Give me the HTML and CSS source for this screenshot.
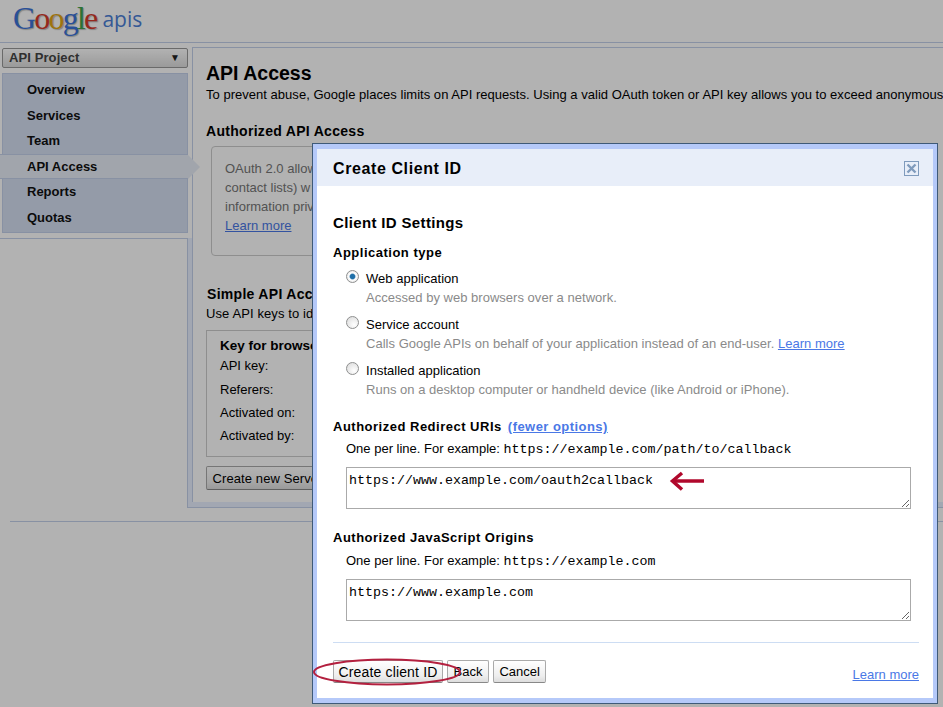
FILE: index.html
```html
<!DOCTYPE html>
<html lang="en">
<head>
  <meta charset="UTF-8" />
  <title>Google apis - API Access</title>
  <link rel="stylesheet" href="styles.css">
</head>
<body>
  <header class="top">
    <div class="logo"><span class="g-blue">G</span><span class="g-red">o</span><span class="g-yellow">o</span><span class="g-blue">g</span><span class="g-green">l</span><span class="g-red">e</span></div>
    <div class="logo-apis">apis</div>
  </header>

  <div class="layout">
    <aside class="side">
      <div class="project">API Project <span class="project-arrow">▼</span></div>
      <nav class="nav">
        <a class="nav-item">Overview</a>
        <a class="nav-item">Services</a>
        <a class="nav-item">Team</a>
        <a class="nav-item active">API Access</a>
        <a class="nav-item">Reports</a>
        <a class="nav-item">Quotas</a>
      </nav>
      <div class="side-rest"></div>
    </aside>

    <main class="panel">
      <h1>API Access</h1>
      <p class="intro">To prevent abuse, Google places limits on API requests. Using a valid OAuth token or API key allows you to exceed anonymous</p>

      <h2>Authorized API Access</h2>
      <div class="oauth-box">
        <div>OAuth 2.0 allow</div>
        <div>contact lists) w</div>
        <div>information priv</div>
        <div><a class="link">Learn more</a></div>
      </div>

      <h2 class="simple-title">Simple API Acc</h2>
      <p class="simple-text">Use API keys to id</p>
      <div class="key-box">
        <div class="key-title">Key for browse</div>
        <div class="key-row first">API key:</div>
        <div class="key-row">Referers:</div>
        <div class="key-row">Activated on:</div>
        <div class="key-row">Activated by:</div>
      </div>
      <button class="btn server-btn">Create new Serve</button>
    </main>
  </div>
  <div class="panel-foot"></div>
  <hr class="page-rule">

  <div class="overlay"></div>

  <div class="modal">
    <div class="modal-inner">
      <div class="modal-title">
        <span>Create Client ID</span>
        <span class="close">
          <svg width="13" height="13" viewBox="0 0 13 13"><path d="M2.5 2.5l8 8M10.5 2.5l-8 8" stroke="#7f9bbd" stroke-width="2.4" fill="none"/></svg>
        </span>
      </div>
      <div class="modal-body">
        <h3>Client ID Settings</h3>
        <h4 class="type-title">Application type</h4>

        <label class="choice">
          <input type="radio" name="apptype" checked>
          <span class="choice-name">Web application</span>
          <span class="choice-hint">Accessed by web browsers over a network.</span>
        </label>
        <label class="choice">
          <input type="radio" name="apptype">
          <span class="choice-name">Service account</span>
          <span class="choice-hint">Calls Google APIs on behalf of your application instead of an end-user. <a class="link">Learn more</a></span>
        </label>
        <label class="choice">
          <input type="radio" name="apptype">
          <span class="choice-name">Installed application</span>
          <span class="choice-hint">Runs on a desktop computer or handheld device (like Android or iPhone).</span>
        </label>

        <h4 class="uri-title">Authorized Redirect URIs <a class="link">(fewer options)</a></h4>
        <p class="uri-help">One per line. For example: <code>https://example.com/path/to/callback</code></p>
        <textarea class="uri-input" spellcheck="false">https://www.example.com/oauth2callback</textarea>

        <h4 class="origin-title">Authorized JavaScript Origins</h4>
        <p class="uri-help origin-help">One per line. For example: <code>https://example.com</code></p>
        <textarea class="uri-input" spellcheck="false">https://www.example.com</textarea>

        <div class="modal-actions">
          <button class="btn action-main">Create client ID</button>
          <button class="btn">Back</button>
          <button class="btn">Cancel</button>
          <a class="link actions-more">Learn more</a>
        </div>
      </div>
    </div>
  </div>

  <!-- red marks drawn over the dialog -->
  <svg class="mark-arrow" width="38" height="20" viewBox="0 0 38 20">
    <path d="M37 10H6" stroke="#b0082c" stroke-width="3.5" fill="none"/>
    <path d="M15 2L5.5 10l9.5 8.5" stroke="#b0082c" stroke-width="3.5" fill="none"/>
  </svg>
  <svg class="mark-ring" width="150" height="30" viewBox="0 0 150 30">
    <ellipse cx="75" cy="14" rx="73" ry="12.5" stroke="#b3203f" stroke-width="2" fill="none"/>
  </svg>
</body>
</html>
```

FILE: styles.css
```css
:root {
  --line: #c3d0ea;
  --band: #e9f0ff;
  --nav-bg: #d5dff1;
  --link: #4a78e6;
}

* {
  box-sizing: border-box;
}

html, body {
  height: 100%;
}

body {
  font-family: "Liberation Sans", Arial, sans-serif;
  font-size: 13px;
  color: #000;
  background: #fff;
  margin: 0;
  overflow: hidden;
  position: relative;
}

.link {
  color: var(--link);
  text-decoration: underline;
}

.btn {
  font-family: inherit;
  font-size: 13px;
  height: 23px;
  padding: 0 5.5px;
  color: #000;
  border: 1px solid #aaa;
  border-bottom-color: #888;
  border-radius: 2px;
  background: linear-gradient(#fff, #eee 70%, #ddd);
}

/* header */
.top {
  height: 43px;
  padding-left: 13px;
  display: flex;
  align-items: flex-start;
  border-bottom: 1px solid var(--line);
}

.logo {
  font-family: "Liberation Serif", serif;
  font-size: 32px;
  line-height: 37px;
  letter-spacing: -1.8px;
  text-shadow: 1px 1px 1px #bbb;
}

.logo-apis {
  font-family: "Open Sans", sans-serif;
  font-size: 21px;
  line-height: 38px;
  margin-left: 6px;
  color: #4c7fd6;
}

.g-blue { color: #3b73d9; }
.g-red { color: #d63a2c; }
.g-yellow { color: #e2a514; }
.g-green { color: #3fa34a; }

/* left column */
.layout {
  display: flex;
  height: 455px;
  margin-top: 4px;
}

.side {
  width: 192px;
  flex: none;
  display: flex;
  flex-direction: column;
  padding-top: 1px;
}

.project {
  margin: 0 4px 0 2px;
  height: 20px;
  padding: 0 7px 2px 6px;
  display: flex;
  justify-content: space-between;
  align-items: center;
  font-size: 13px;
  font-weight: bold;
  letter-spacing: 0.1px;
  color: #444;
  border: 1px solid #999;
  border-radius: 2px;
  background: linear-gradient(#fff, #ddd);
}

.project-arrow {
  font-size: 10px;
  color: #222;
}

.nav {
  margin: 5px 4px 5px 2px;
  height: 160px;
  padding-top: 3px;
  background: var(--nav-bg);
  border: 1px solid var(--line);
  display: flex;
  flex-direction: column;
}

.nav-item {
  height: 25.6px;
  line-height: 25px;
  padding-left: 24px;
  font-size: 13px;
  font-weight: bold;
  color: #111;
}

.nav-item.active {
  position: relative;
  margin: 0 -1px 0 -3px;
  padding-left: 27px;
  background: #e7ecf6;
  border-top: 1px solid var(--line);
  border-bottom: 1px solid var(--line);
  line-height: 23px;
}

.nav-item.active::after {
  content: "";
  position: absolute;
  left: 100%;
  top: 0;
  border-left: 12px solid #e7ecf6;
  border-top: 12px solid transparent;
  border-bottom: 12px solid transparent;
}

.side-rest {
  flex: 1;
  margin-right: 4px;
  border-top: 1px solid var(--line);
  border-right: 1px solid var(--line);
  box-shadow: 4px 0 0 var(--band);
}

/* main panel */
.panel {
  flex: 1;
  min-width: 0;
  padding: 12px 0 0 13px;
  border-top: 1px solid var(--line);
  border-left: 1px solid var(--line);
  white-space: nowrap;
  overflow: hidden;
}

h1 {
  font-size: 19.5px;
  line-height: 26px;
  margin: 0;
}

.intro {
  margin: 1px 0 0;
  line-height: 16px;
  font-size: 13px;
  letter-spacing: 0.025px;
}

h2 {
  font-size: 14px;
  line-height: 18px;
  letter-spacing: 0.3px;
  margin: 19px 0 0;
}

.oauth-box {
  width: 600px;
  margin: 6px 0 0 5px;
  height: 110px;
  padding: 12px 0 0 13px;
  line-height: 19px;
  font-size: 13px;
  color: #767676;
  border: 1px solid #ccc;
  border-radius: 4px;
}

.simple-title {
  margin: 29px 0 0 1px;
}

.simple-text {
  margin: 3px 0 0;
  line-height: 16px;
  letter-spacing: 0.1px;
}

.key-box {
  width: 600px;
  margin-top: 8px;
  height: 127px;
  padding: 6px 0 0 13px;
  border: 1px solid #ccc;
}

.key-title {
  font-size: 13.5px;
  font-weight: bold;
  line-height: 17px;
}

.key-row {
  line-height: 23.2px;
}

.key-row.first {
  line-height: 24px;
}

.server-btn {
  display: block;
  width: 300px;
  height: 24px;
  margin-top: 9px;
  text-align: left;
  font-size: 13px;
  letter-spacing: 0.1px;
}

.panel-foot {
  margin-left: 187px;
  height: 6px;
  background: var(--band);
  border-left: 1px solid var(--line);
  border-bottom: 1px solid var(--line);
}

.page-rule {
  margin: 13px 0 0 10px;
  border: 0;
  border-top: 1px solid var(--line);
}

.overlay {
  position: absolute;
  inset: 0;
  background: rgba(0, 0, 0, 0.3);
}

/* dialog */
.modal {
  position: absolute;
  left: 312px;
  top: 143px;
  width: 626px;
  height: 561px;
  border: 1px solid #3f5a78;
}

.modal-inner {
  height: 100%;
  background: #fff;
  border: 4px solid #b5c9f9;
  border-top-width: 5px;
  border-bottom-width: 5px;
}

.modal-title {
  height: 37px;
  padding: 0 14px 0 16px;
  display: flex;
  justify-content: space-between;
  align-items: center;
  font-size: 16px;
  font-weight: bold;
  letter-spacing: 0.6px;
  background: #e8eef9;
}

.modal-title > span:first-child {
  padding-top: 2px;
}

.close {
  width: 15px;
  height: 15px;
  display: block;
  border: 1px solid #7f9bbd;
  margin-top: 1px;
}

.close svg {
  display: block;
}

.modal-body {
  padding: 0 14px 0 16px;
}

h3 {
  font-size: 15px;
  line-height: 18px;
  letter-spacing: 0.35px;
  margin: 28px 0 0;
}

h4 {
  font-size: 13px;
  line-height: 16px;
  letter-spacing: 0.5px;
  margin: 0;
}

.type-title {
  margin-top: 13px;
}

.choice {
  display: grid;
  grid-template-columns: 20px 1fr;
  margin: 8px 0 0 13px;
  height: 38px;
  line-height: 19px;
  letter-spacing: 0.02px;
}

.choice input {
  appearance: none;
  margin: 1px 0 0;
  width: 13px;
  height: 13px;
  border: 1px solid #8e8f8f;
  border-radius: 50%;
  background: radial-gradient(circle at 65% 70%, #fff, #e2e2e2 75%);
}

.choice input:checked {
  background: radial-gradient(circle at 50% 50%, #1f6fa8 0, #1f6fa8 28%, #fff 45%, #e2e2e2 85%);
}

.choice-hint {
  grid-column: 2;
  color: #8a8a8a;
}

.uri-title {
  margin-top: 20px;
}

.uri-title .link {
  margin-left: 2px;
  letter-spacing: 0.45px;
}

.uri-help {
  margin: 6px 0 0 13px;
  line-height: 16px;
}

.origin-help {
  margin-top: 7px;
}

code {
  font-family: "Liberation Mono", monospace;
  font-size: 13.33px;
}

.uri-input {
  display: block;
  width: 565px;
  height: 42px;
  margin: 9px 0 0 13px;
  padding: 5px 2px;
  font-family: "Liberation Mono", monospace;
  font-size: 13.33px;
  line-height: 15px;
  color: #000;
  border: 1px solid #aaa;
  border-radius: 0;
  outline: none;
}

.origin-title {
  margin-top: 21px;
}

.modal-actions {
  margin-top: 21px;
  padding-top: 17px;
  border-top: 1px solid #cdddf3;
  display: flex;
  gap: 4px;
}

.action-main {
  width: 110px;
  padding: 0;
  font-size: 14px;
  letter-spacing: 0.15px;
}

.actions-more {
  margin: 7px 0 0 auto;
  line-height: 16px;
}

/* red marks */
.mark-arrow {
  position: absolute;
  left: 667px;
  top: 471px;
}

.mark-ring {
  position: absolute;
  left: 312px;
  top: 658px;
}
```
